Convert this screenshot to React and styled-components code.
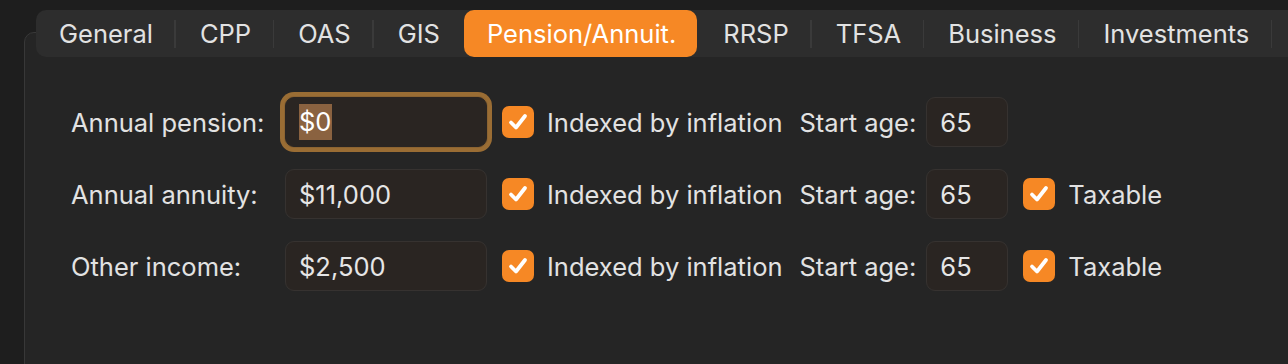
import React from "react";
import styled, { createGlobalStyle } from "styled-components";

const Global = createGlobalStyle`
  html, body { margin: 0; padding: 0; background: #1e1e1e; overflow: hidden; }
  body { font-family: Inter, "Noto Sans", sans-serif; -webkit-font-smoothing: antialiased; }
`;

const Page = styled.div`
  width: 1288px;
  height: 364px;
  padding: 32px 0 0 24px;
  box-sizing: border-box;
  overflow: hidden;
`;

const Panel = styled.div`
  width: 1400px;
  height: 400px;
  box-sizing: border-box;
  background: #252525;
  border: 1px solid #383838;
  border-radius: 10px;
  padding: 0 0 0 11px;
`;

const TabBar = styled.div`
  display: flex;
  width: fit-content;
  align-items: center;
  height: 47px;
  margin-top: -23px;
  padding-right: 60px;
  background: #2d2d2d;
  border-radius: 10px;
  white-space: nowrap;
`;

const Tab = styled.div`
  height: 47px;
  display: flex;
  align-items: center;
  padding: 0 20.5px 0 23px;
  font-size: 25.5px;
  color: ${(p) => (p.$active ? "#ffffff" : "#e2e2e2")};
  background: ${(p) => (p.$active ? "#f68825" : "transparent")};
  border-radius: 10px;
`;

const Sep = styled.div`
  width: 1.5px;
  height: 28px;
  margin: 0 1px;
  background: ${(p) => (p.$hidden ? "transparent" : "#3a3a3a")};
`;

const Form = styled.div`
  display: flex;
  flex-direction: column;
  gap: 22px;
  padding: 40px 0 0 35px;
`;

const Row = styled.div`
  display: flex;
  align-items: center;
  height: 50px;
`;

const Label = styled.div`
  width: 214px;
  font-size: 25.5px;
  color: #e2e2e2;
`;

const Input = styled.div`
  width: ${(p) => p.$w}px;
  height: 50px;
  box-sizing: border-box;
  display: flex;
  align-items: center;
  padding-left: 13px;
  font-size: 25.5px;
  color: #e6e6e6;
  background: #2a2522;
  border: 1px solid ${(p) => (p.$focus ? "#2a2522" : "#363230")};
  border-radius: 9px;
  box-shadow: ${(p) => (p.$focus ? "0 0 0 1px #8c6432, 0 0 0 5px #9a6d34" : "none")};
  margin-right: 15px;
`;

const Selected = styled.span`
  background: #8a6240;
  color: #ffffff;
  padding: 2px 1px 3px 0;
`;

const Box = styled.div`
  width: 32px;
  height: 32px;
  border-radius: 7px;
  background: #f68825;
  display: flex;
  align-items: center;
  justify-content: center;
  margin-right: 13px;
  flex-shrink: 0;
`;

const Text = styled.div`
  font-size: 25.5px;
  color: #e2e2e2;
  margin-right: ${(p) => p.$mr || 0}px;
`;

const Check = () => (
  <Box>
    <svg width="24" height="24" viewBox="0 0 24 24">
      <path d="M5 12.5 L10 17.5 L19 6" fill="none" stroke="#fff" strokeWidth="3.8" strokeLinecap="round" strokeLinejoin="round" />
    </svg>
  </Box>
);

const tabs = ["General", "CPP", "OAS", "GIS", "Pension/Annuit.", "RRSP", "TFSA", "Business", "Investments"];
const active = 4;

const rows = [
  { label: "Annual pension:", value: "$0", focus: true, taxable: false },
  { label: "Annual annuity:", value: "$11,000", taxable: true },
  { label: "Other income:", value: "$2,500", taxable: true },
];

export default function App() {
  return (
    <>
      <Global />
      <Page>
        <Panel>
          <TabBar>
            {tabs.map((t, i) => (
              <React.Fragment key={t}>
                {i > 0 && <Sep $hidden={i === active || i === active + 1} />}
                <Tab $active={i === active}>{t}</Tab>
              </React.Fragment>
            ))}
            <Sep />
          </TabBar>
          <Form>
            {rows.map((r) => (
              <Row key={r.label}>
                <Label>{r.label}</Label>
                <Input $w={202} $focus={r.focus}>
                  {r.focus ? <Selected>{r.value}</Selected> : r.value}
                </Input>
                <Check />
                <Text $mr={17}>Indexed by inflation</Text>
                <Text $mr={10}>Start age:</Text>
                <Input $w={82}>65</Input>
                {r.taxable && (
                  <>
                    <Check />
                    <Text>Taxable</Text>
                  </>
                )}
              </Row>
            ))}
          </Form>
        </Panel>
      </Page>
    </>
  );
}
